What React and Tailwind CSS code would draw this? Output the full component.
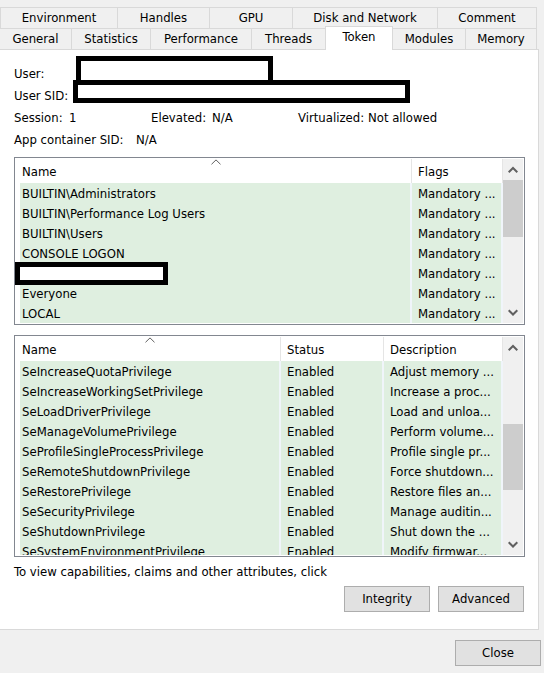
import React from "react";

const groups = [
  "BUILTIN\\Administrators",
  "BUILTIN\\Performance Log Users",
  "BUILTIN\\Users",
  "CONSOLE LOGON",
  "",
  "Everyone",
  "LOCAL",
];

const privileges = [
  ["SeIncreaseQuotaPrivilege", "Adjust memory ..."],
  ["SeIncreaseWorkingSetPrivilege", "Increase a proc..."],
  ["SeLoadDriverPrivilege", "Load and unloa..."],
  ["SeManageVolumePrivilege", "Perform volume..."],
  ["SeProfileSingleProcessPrivilege", "Profile single pr..."],
  ["SeRemoteShutdownPrivilege", "Force shutdown..."],
  ["SeRestorePrivilege", "Restore files an..."],
  ["SeSecurityPrivilege", "Manage auditin..."],
  ["SeShutdownPrivilege", "Shut down the ..."],
  ["SeSystemEnvironmentPrivilege", "Modify firmwar..."],
];

function Tab({ children, className = "" }) {
  return (
    <button
      type="button"
      role="tab"
      aria-selected="false"
      className={`h-[21px] border-t border-r border-[#d9d9d9] leading-4 whitespace-nowrap ${className}`}
    >
      {children}
    </button>
  );
}

function ScrollArrow({ down }) {
  return (
    <button
      type="button"
      aria-label={down ? "Scroll down" : "Scroll up"}
      className="flex h-[21px] w-full shrink-0 items-center justify-center"
    >
      <svg width="10" height="8" viewBox="0 0 10 8" fill="none" stroke="#606060" strokeWidth="2">
        <path d={down ? "M0.7 1.2 5 5.5 9.3 1.2" : "M0.7 6.3 5 2 9.3 6.3"} />
      </svg>
    </button>
  );
}

function ScrollBar({ children }) {
  return (
    <div className="my-px mr-px flex w-5 shrink-0 flex-col bg-[#f0f0f0]">
      <ScrollArrow />
      <div className="flex-1">{children}</div>
      <ScrollArrow down />
    </div>
  );
}

function SortMark() {
  return (
    <svg
      className="absolute top-0 left-1/2 -translate-x-1/2"
      width="10"
      height="6"
      viewBox="0 0 10 6"
      fill="none"
      stroke="#606060"
    >
      <path d="M0.5 5.3 5 0.9 9.5 5.3" />
    </svg>
  );
}

function Head({ children, sorted, className = "" }) {
  return (
    <th
      scope="col"
      className={`relative h-6 border-r border-[#e5e5e5] p-0 pt-px text-left font-normal ${className}`}
    >
      {sorted && <SortMark />}
      {children}
    </th>
  );
}

function Cell({ children, className = "" }) {
  return (
    <td
      className={`h-5 border-r-2 border-[#f0f5fa] bg-[#dfefe0] bg-clip-padding p-0 pt-0.5 whitespace-nowrap ${className}`}
    >
      {children}
    </td>
  );
}

function Row({ cells }) {
  return (
    <tr className="relative">
      <td className="p-0" />
      {cells.map((cell, i) => (
        <Cell key={i} className={i === 0 ? "pl-0.5" : "pl-1.5"}>
          {cell}
        </Cell>
      ))}
    </tr>
  );
}

const tableClass = "w-full table-fixed border-separate border-spacing-0 leading-4";

export default function App() {
  return (
    <main className="min-h-screen bg-[#f0f0f0] pt-[7px] pb-[7px] font-['DejaVu_Sans_Condensed','DejaVu_Sans',sans-serif] text-[13px] leading-4 text-black [font-stretch:condensed]">
      <div role="tablist" className="mr-[7px]">
        <div className="grid grid-cols-[118fr_92fr_83fr_145fr_99fr]">
          <Tab className="border-l">Environment</Tab>
          <Tab>Handles</Tab>
          <Tab>GPU</Tab>
          <Tab>Disk and Network</Tab>
          <Tab>Comment</Tab>
        </div>
        <div className="grid grid-cols-[72fr_79fr_101fr_73fr_68fr_73fr_71fr]">
          <Tab>General</Tab>
          <Tab>Statistics</Tab>
          <Tab>Performance</Tab>
          <Tab className="border-r-0">Threads</Tab>
          <button
            type="button"
            role="tab"
            aria-selected="true"
            className="relative z-10 -mt-0.5 -mb-px border-x border-t border-[#d9d9d9] bg-white pb-1 leading-4"
          >
            Token
          </button>
          <Tab>Modules</Tab>
          <Tab>Memory</Tab>
        </div>
      </div>

      <section role="tabpanel" aria-label="Token" className="mr-[5px] border-y border-r border-[#d9d9d9] bg-white pt-[13px] pr-[13px] pb-[17px] pl-3.5">
        <div className="relative flex h-[22px] items-center">
          <label htmlFor="user">User:</label>
          <input id="user" readOnly className="absolute bottom-0 left-[62px] h-[29px] w-[197px] border-5 border-black bg-white" />
        </div>
        <div className="relative flex h-[22px] items-center">
          <label htmlFor="sid">User SID:</label>
          <input id="sid" readOnly className="absolute bottom-1 left-[59px] h-[23px] w-[337px] border-5 border-black bg-white" />
        </div>
        <div className="flex h-[22px] items-center">
          <span className="w-[55px]">Session:</span>
          <span className="w-[82px]">1</span>
          <span className="w-[61px]">Elevated:</span>
          <span className="w-[86px]">N/A</span>
          <span className="w-[70px]">Virtualized:</span>
          <span>Not allowed</span>
        </div>
        <div className="flex h-[22px] items-center">
          <span className="w-[122px]">App container SID:</span>
          <span>N/A</span>
        </div>

        <div className="mt-1.5 flex h-[168px] border border-[#828790]">
          <div className="relative min-w-0 flex-1 py-px">
            <table className={tableClass}>
              <colgroup>
                <col className="w-[5px]" />
                <col />
                <col className="w-[91px]" />
              </colgroup>
              <thead>
                <tr>
                  <th className="p-0" />
                  <Head sorted className="pl-0.5">Name</Head>
                  <Head className="pl-1.5">Flags</Head>
                </tr>
              </thead>
              <tbody>
                {groups.map((name, i) => (
                  <Row key={i} cells={[name, "Mandatory ..."]} />
                ))}
              </tbody>
            </table>
            <div className="absolute top-[104px] left-0 h-[23px] w-[153px] border-5 border-black bg-white" />
          </div>
          <ScrollBar>
            <div className="h-[57px] bg-[#cdcdcd]" />
          </ScrollBar>
        </div>

        <div className="mt-2.5 flex h-[222px] border border-[#828790]">
          <div className="min-w-0 flex-1 py-px">
            <div className="h-full overflow-hidden">
              <table className={tableClass}>
                <colgroup>
                  <col className="w-[5px]" />
                  <col />
                  <col className="w-[103px]" />
                  <col className="w-[119px]" />
                </colgroup>
                <thead>
                  <tr>
                    <th className="p-0" />
                    <Head sorted className="pl-0.5">Name</Head>
                    <Head className="pl-1.5">Status</Head>
                    <Head className="pl-1.5">Description</Head>
                  </tr>
                </thead>
                <tbody>
                  {privileges.map(([name, description]) => (
                    <Row key={name} cells={[name, "Enabled", description]} />
                  ))}
                </tbody>
              </table>
            </div>
          </div>
          <ScrollBar>
            <div className="mt-[66px] h-[66px] bg-[#cdcdcd]" />
          </ScrollBar>
        </div>

        <p className="mt-[7px]">To view capabilities, claims and other attributes, click</p>
        <div className="mt-[6px] mr-px flex justify-end gap-2">
          <button type="button" className="h-[26px] w-[86px] border border-[#adadad] bg-[#e1e1e1]">Integrity</button>
          <button type="button" className="h-[26px] w-[86px] border border-[#adadad] bg-[#e1e1e1]">Advanced</button>
        </div>
      </section>

      <div className="mt-2.5 mr-[3px] flex justify-end">
        <button type="button" className="h-[26px] w-[86px] border border-[#adadad] bg-[#e1e1e1]">Close</button>
      </div>
    </main>
  );
}
